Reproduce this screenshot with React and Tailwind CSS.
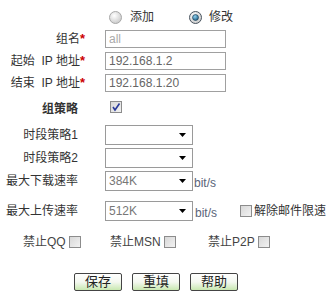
import React from 'react';

const font = { fontFamily: '"Liberation Sans", Arial, "Noto Sans CJK SC", sans-serif' };

function Radio({ checked }) {
  return (
    <svg width="13" height="13" viewBox="0 0 13 13">
      <defs>
        <radialGradient id={checked ? 'rg1' : 'rg0'} cx="40%" cy="35%" r="70%">
          <stop offset="0%" stopColor="#ffffff" />
          <stop offset="100%" stopColor="#c8c8c8" />
        </radialGradient>
        <radialGradient id="dot" cx="40%" cy="35%" r="70%">
          <stop offset="0%" stopColor="#8fd0f0" />
          <stop offset="100%" stopColor="#1a5a80" />
        </radialGradient>
      </defs>
      <circle cx="6.5" cy="6.5" r="6" fill={`url(#${checked ? 'rg1' : 'rg0'})`} stroke={checked ? '#4a5560' : '#a8a8a8'} strokeWidth="1" />
      {checked && <circle cx="6.5" cy="6.5" r="3" fill="url(#dot)" stroke="#1c3c50" strokeWidth="0.6" />}
    </svg>
  );
}

function Check({ checked }) {
  return (
    <span className="inline-block w-[12px] h-[12px] border border-[#8c8c8c] bg-gradient-to-br from-[#d8d8d8] to-[#f2f2f2] relative">
      {checked && (
        <svg className="absolute left-0 top-0" width="10" height="10" viewBox="0 0 10 10">
          <path d="M2 5 L4 8 L8.5 1.5" fill="none" stroke="#2a3a9a" strokeWidth="1.6" />
        </svg>
      )}
    </span>
  );
}

function Select({ value }) {
  return (
    <div className="w-[88px] h-[20px] border border-[#9a9a9a] bg-white flex items-center pl-[3px] pr-[6px] text-[12px] text-[#777]">
      <span className="flex-1">{value}</span>
      <svg width="7" height="4" viewBox="0 0 7 4"><path d="M0 0 H7 L3.5 4 Z" fill="#000" /></svg>
    </div>
  );
}

function Row({ label, star, className, children }) {
  return (
    <div className={`flex items-center ${className}`}>
      <div className={`w-[85px] text-right text-[12px] text-[#333] whitespace-pre ${star ? '' : 'pr-[7px]'}`}>
        {label}
        {star && <span className="text-[#cc0000] font-bold text-[13px]">*</span>}
      </div>
      <div className="ml-[20px] flex items-center">{children}</div>
    </div>
  );
}

function Input({ value, muted }) {
  return (
    <div className={`w-[121px] h-[18px] border border-[#a0a0a0] bg-white flex items-center pl-[3px] text-[12px] ${muted ? 'text-[#aaa]' : 'text-[#666]'}`}>
      {value}
    </div>
  );
}

function Btn({ children }) {
  return (
    <div className="w-[48px] h-[18px] border border-[#444] rounded-[2px] bg-gradient-to-b from-white via-[#f4f8f0] to-[#c8e8b0] flex items-center justify-center text-[13px] text-[#222]">
      {children}
    </div>
  );
}

export default function App() {
  return (
    <div className="w-[329px] h-[298px] bg-white overflow-hidden" style={font}>
      <div className="flex flex-col pt-[4px]">
        <div className="h-[26px] flex items-center text-[12px] text-[#333]">
          <div className="ml-[109px]"><Radio /></div>
          <span className="ml-[8px]">添加</span>
          <div className="ml-[35px]"><Radio checked /></div>
          <span className="ml-[7px]">修改</span>
        </div>
        <Row label="组名" star className="h-[18px]"><Input value="all" muted /></Row>
        <Row label="起始  IP 地址" star className="h-[18px] mt-[4px]"><Input value="192.168.1.2" /></Row>
        <Row label="结束  IP 地址" star className="h-[18px] mt-[4px]"><Input value="192.168.1.20" /></Row>
        <div className="h-[22px] mt-[6px] flex items-center">
          <div className="w-[85px] text-right pr-[7px] text-[12px] font-bold text-[#333]">组策略</div>
          <div className="ml-[25px] -mt-[4px] flex"><Check checked /></div>
        </div>
        <Row label="时段策略1" className="h-[20px] mt-[5px]"><Select value="" /></Row>
        <Row label="时段策略2" className="h-[20px] mt-[3px]"><Select value="" /></Row>
        <Row label="最大下载速率" className="h-[20px] mt-[3px]">
          <Select value="384K" />
          <span className="ml-[1px] mt-[3px] text-[12px] text-[#5a6478]">bit/s</span>
        </Row>
        <Row label="最大上传速率" className="h-[20px] mt-[10px]">
          <Select value="512K" />
          <span className="ml-[2px] mt-[3px] text-[12px] text-[#5a6478]">bit/s</span>
          <span className="ml-[23px] flex"><Check /></span>
          <span className="ml-[2px] text-[12px] text-[#333]">解除邮件限速</span>
        </Row>
        <div className="h-[20px] mt-[11px] flex items-center text-[12px] text-[#444]">
          <div className="ml-[23px] w-[87px] flex items-center gap-[3px]">禁止QQ <Check /></div>
          <div className="w-[98px] flex items-center gap-[3px]">禁止MSN <Check /></div>
          <div className="flex items-center gap-[3px]">禁止P2P <Check /></div>
        </div>
        <div className="mt-[21px] flex gap-[10px] pl-[74px]">
          <Btn>保存</Btn>
          <Btn>重填</Btn>
          <Btn>帮助</Btn>
        </div>
      </div>
    </div>
  );
}
